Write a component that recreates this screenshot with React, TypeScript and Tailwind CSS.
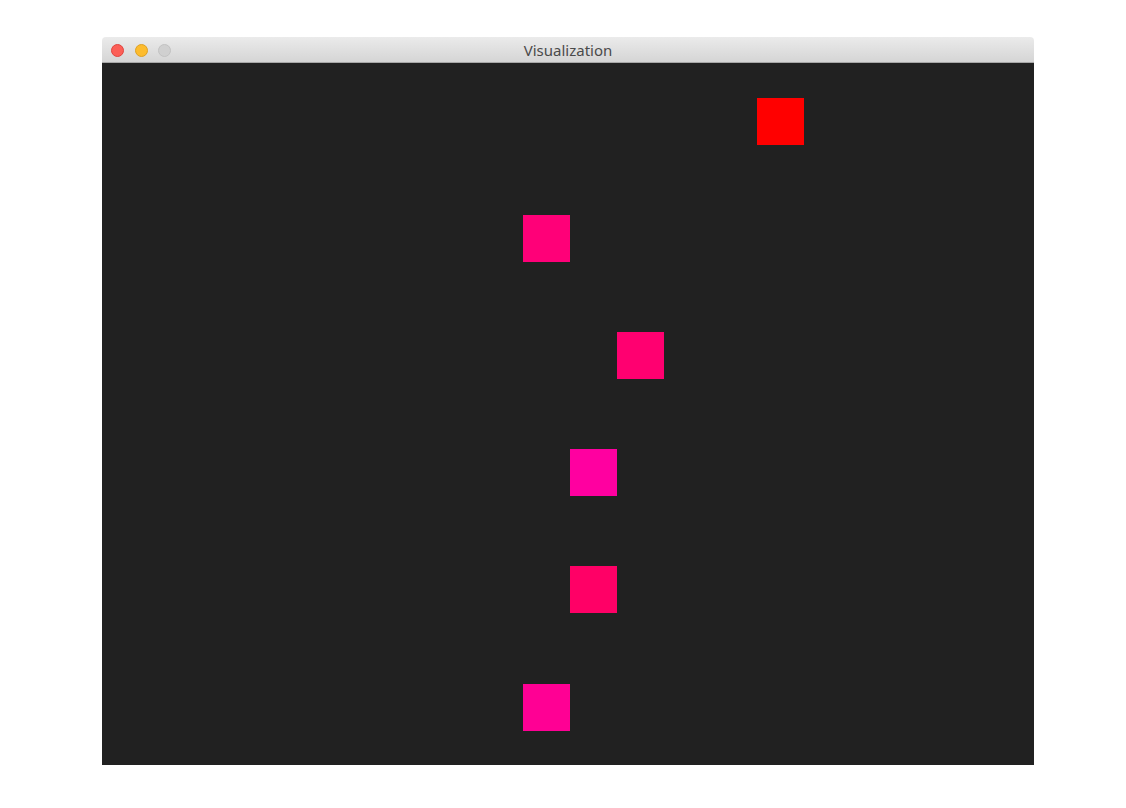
const squares = [
  { x: 655, y: 36, color: '#ff0000' },
  { x: 421, y: 153, color: '#ff0078' },
  { x: 515, y: 270, color: '#ff0070' },
  { x: 468, y: 387, color: '#ff00a0' },
  { x: 468, y: 504, color: '#ff0066' },
  { x: 421, y: 622, color: '#ff0094' },
]

export default function App() {
  return (
    <div className="w-[1126px] h-[808px] bg-white pt-[37px] pl-[102px]" style={{ fontFamily: '"Noto Sans", "Liberation Sans", sans-serif' }}>
      <div className="w-[932px] flex flex-col">
        {/* title bar */}
        <div className="relative h-[26px] flex items-center justify-center pt-[1px] bg-gradient-to-b from-[#ebebeb] to-[#d5d5d5] border-b border-[#a8a8a8] rounded-t-[4px]">
          <div className="absolute left-[9px] top-[7px] flex gap-[10.5px]">
            <span className="w-[13px] h-[13px] rounded-full bg-[#fc5f57] border border-[#e0443e]" />
            <span className="w-[13px] h-[13px] rounded-full bg-[#fdbc2e] border border-[#dea123]" />
            <span className="w-[13px] h-[13px] rounded-full bg-[#d0d0d0] border border-[#c2c2c2]" />
          </div>
          <span className="text-[15px] text-[#4a4a4a] leading-none">Visualization</span>
        </div>
        {/* canvas */}
        <div className="relative h-[702px] bg-[#212121]">
          {squares.map((s, i) => (
            <div
              key={i}
              className="absolute w-[47px] h-[47px]"
              style={{ left: s.x, top: s.y - 1, backgroundColor: s.color }}
            />
          ))}
        </div>
      </div>
    </div>
  )
}
